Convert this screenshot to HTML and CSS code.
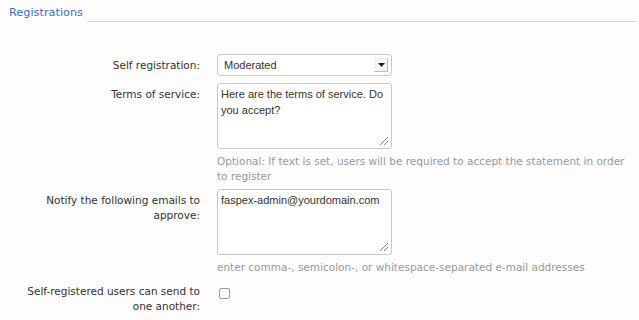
FILE: index.html
```html
<!DOCTYPE html>
<html lang="en">
<head>
  <meta charset="UTF-8">
  <title>Registrations</title>
  <link rel="stylesheet" href="styles.css">
</head>
<body>
  <div class="section-head">
    <h2>Registrations</h2>
    <div class="rule"></div>
  </div>

  <form class="settings">
    <label class="field-label">Self registration:</label>
    <div class="field">
      <div class="select">
        <span>Moderated</span>
        <span class="arrow"><svg width="7" height="4" viewBox="0 0 7 4"><path d="M0 0h7L3.5 4z" fill="#222"/></svg></span>
      </div>
    </div>

    <label class="field-label">Terms of service:</label>
    <div class="field">
      <div class="textarea">Here are the terms of service. Do you accept?<span class="grip"></span></div>
      <p class="help">Optional: If text is set, users will be required to accept the statement in order to register</p>
    </div>

    <label class="field-label">Notify the following emails to approve:</label>
    <div class="field">
      <div class="textarea nowrap">faspex-admin@yourdomain.com<span class="grip"></span></div>
      <p class="help">enter comma-, semicolon-, or whitespace-separated e-mail addresses</p>
    </div>

    <label class="field-label">Self-registered users can send to one another:</label>
    <div class="field">
      <span class="checkbox"></span>
    </div>
  </form>
</body>
</html>
```

FILE: styles.css
```css
body {
  margin: 0;
  background-color: #fdfdfd;
  font-family: "DejaVu Sans", Verdana, sans-serif;
  font-size: 10.5px;
  color: #333;
}
.section-head {
  display: flex;
  align-items: flex-end;
  padding: 5px 2px 0 9px;
}
.section-head h2 {
  margin: 0;
  font-size: 11.3px;
  font-weight: normal;
  color: #3d6fc2;
  line-height: 16px;
}
.rule {
  flex: 1;
  margin-left: 4px;
  border-bottom: 1px solid #d6d6d6;
  margin-bottom: -1px;
}
.settings {
  display: grid;
  grid-template-columns: 180px 420px;
  column-gap: 17px;
  row-gap: 7px;
  padding: 33px 0 0 20px;
}
.field-label {
  text-align: right;
  padding-top: 4px;
  line-height: 15px;
}
.select {
  width: 175px;
  height: 22px;
  box-sizing: border-box;
  border: 1px solid #c8c8c8;
  border-radius: 3px;
  background: #fff;
  display: flex;
  align-items: center;
  justify-content: space-between;
  padding: 0 3px 0 6px;
  font-family: "Liberation Sans", Arial, sans-serif;
  font-size: 11px;
  color: #333;
}
.arrow {
  width: 14px;
  height: 14px;
  box-sizing: border-box;
  border: 1px solid #bbb;
  border-top-color: #eee;
  border-left-color: #eee;
  background: #f4f4f4;
  display: flex;
  align-items: center;
  justify-content: center;
}
.textarea {
  position: relative;
  width: 175px;
  height: 66px;
  box-sizing: border-box;
  border: 1px solid #c8c8c8;
  border-radius: 3px;
  background: #fff;
  padding: 2px 3px;
  font-family: "Liberation Sans", Arial, sans-serif;
  font-size: 11px;
  line-height: 16px;
  color: #333;
}
.nowrap {
  white-space: nowrap;
}
.grip {
  position: absolute;
  right: 3px;
  bottom: 3px;
  width: 8px;
  height: 8px;
  background: linear-gradient(135deg, transparent 45%, #888 45%, #888 52%, transparent 52%, transparent 70%, #888 70%, #888 77%, transparent 77%);
}
.help {
  margin: 5px 0 -2px;
  color: #999;
  line-height: 15px;
}
.checkbox {
  display: block;
  margin: 8px 0 0 2px;
  width: 11px;
  height: 11px;
  box-sizing: border-box;
  border: 1px solid #999;
  border-radius: 2px;
  background: #fff;
}
```
